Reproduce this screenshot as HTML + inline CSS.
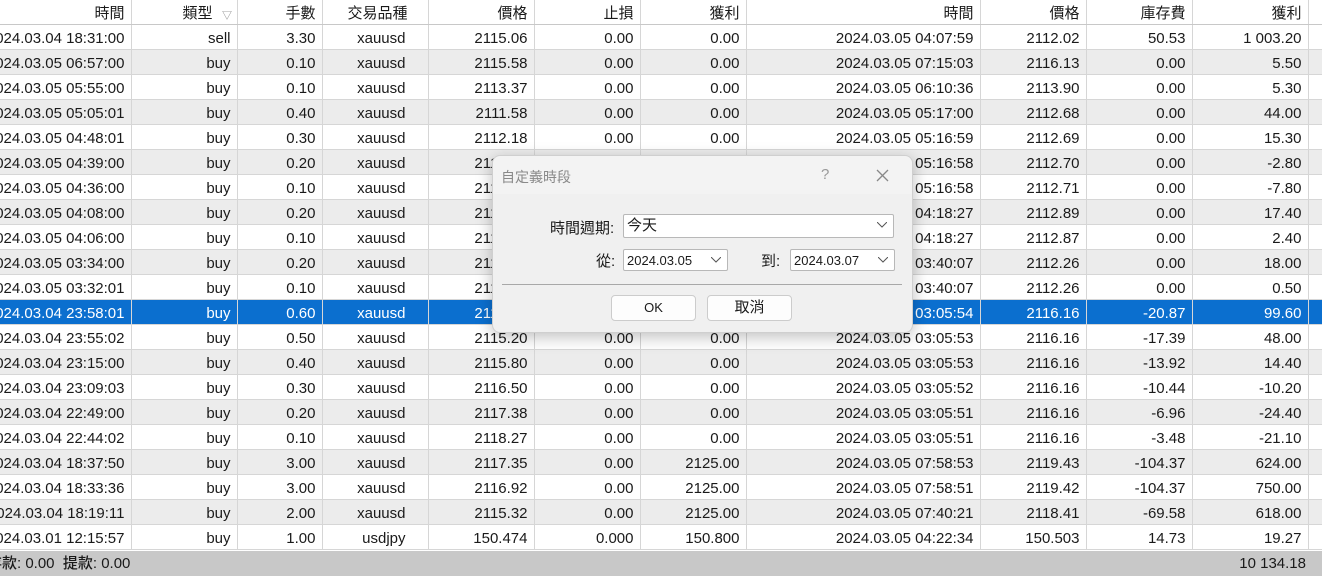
<!DOCTYPE html><html><head><meta charset="utf-8"><style>
body{margin:0;width:1322px;height:585px;overflow:hidden;background:#fff;font-family:"Liberation Sans","Noto Sans CJK TC",sans-serif;color:#1a1a1a;position:relative}
table{position:absolute;left:0;top:0;width:1322px;border-collapse:collapse;table-layout:fixed;font-size:15px}
td{height:21px;padding:3px 6px 0 0;text-align:right;border-right:1px solid #d6d6d6;border-bottom:1px solid #d6d6d6;white-space:nowrap;overflow:hidden;line-height:21px;box-sizing:content-box}
tr.h td{background:#fff;border-bottom:1px solid #c8c8c8}
tr:nth-child(odd):not(.h) td{background:#ececec}
tr.sel td{background:#0b6fcf!important;color:#fff}
td:first-child{direction:rtl}
td:first-child span{display:inline-block;direction:ltr}
.foot{position:absolute;left:0;top:551px;width:1322px;height:25px;background:#c8c8c8;font-size:15px;line-height:25px;font-weight:500}
.dlg{position:absolute;left:492px;top:155px;width:419px;height:176px;background:#f0f0f0;border:1px solid #cfcfcf;border-radius:8px;box-shadow:0 4px 16px rgba(0,0,0,.25);font-size:14px}
.tb{height:38px;background:#f3f3f3;border-radius:8px 8px 0 0}
.a{position:absolute}
.box{position:absolute;background:#fff;border:1px solid #b8b8b8;border-radius:2px;height:22px;line-height:22px;font-size:13px;padding-left:3px;box-sizing:border-box}
.box svg{position:absolute;right:6px;top:7px}
.btn{position:absolute;top:139px;width:85px;height:26px;background:#fdfdfd;border:1px solid #ccc;border-radius:4px;box-sizing:border-box;text-align:center;line-height:24px;font-size:13px}
</style></head><body>
<table>
<colgroup><col style="width:131px"><col style="width:106px"><col style="width:85px"><col style="width:106px"><col style="width:106px"><col style="width:106px"><col style="width:106px"><col style="width:234px"><col style="width:106px"><col style="width:106px"><col style="width:116px"><col style="width:14px"></colgroup>
<tr class="h"><td><span>時間</span></td><td style="padding-right:24px">類型</td><td>手數</td><td style="padding-right:20px">交易品種</td><td>價格</td><td>止損</td><td>獲利</td><td>時間</td><td>價格</td><td>庫存費</td><td>獲利</td><td></td></tr>
<tr><td><span>2024.03.04 18:31:00</span></td><td>sell</td><td>3.30</td><td style="padding-right:22px">xauusd</td><td>2115.06</td><td>0.00</td><td>0.00</td><td>2024.03.05 04:07:59</td><td>2112.02</td><td>50.53</td><td>1 003.20</td><td></td></tr>
<tr><td><span>2024.03.05 06:57:00</span></td><td>buy</td><td>0.10</td><td style="padding-right:22px">xauusd</td><td>2115.58</td><td>0.00</td><td>0.00</td><td>2024.03.05 07:15:03</td><td>2116.13</td><td>0.00</td><td>5.50</td><td></td></tr>
<tr><td><span>2024.03.05 05:55:00</span></td><td>buy</td><td>0.10</td><td style="padding-right:22px">xauusd</td><td>2113.37</td><td>0.00</td><td>0.00</td><td>2024.03.05 06:10:36</td><td>2113.90</td><td>0.00</td><td>5.30</td><td></td></tr>
<tr><td><span>2024.03.05 05:05:01</span></td><td>buy</td><td>0.40</td><td style="padding-right:22px">xauusd</td><td>2111.58</td><td>0.00</td><td>0.00</td><td>2024.03.05 05:17:00</td><td>2112.68</td><td>0.00</td><td>44.00</td><td></td></tr>
<tr><td><span>2024.03.05 04:48:01</span></td><td>buy</td><td>0.30</td><td style="padding-right:22px">xauusd</td><td>2112.18</td><td>0.00</td><td>0.00</td><td>2024.03.05 05:16:59</td><td>2112.69</td><td>0.00</td><td>15.30</td><td></td></tr>
<tr><td><span>2024.03.05 04:39:00</span></td><td>buy</td><td>0.20</td><td style="padding-right:22px">xauusd</td><td>2112.00</td><td>0.00</td><td>0.00</td><td>2024.03.05 05:16:58</td><td>2112.70</td><td>0.00</td><td>-2.80</td><td></td></tr>
<tr><td><span>2024.03.05 04:36:00</span></td><td>buy</td><td>0.10</td><td style="padding-right:22px">xauusd</td><td>2112.00</td><td>0.00</td><td>0.00</td><td>2024.03.05 05:16:58</td><td>2112.71</td><td>0.00</td><td>-7.80</td><td></td></tr>
<tr><td><span>2024.03.05 04:08:00</span></td><td>buy</td><td>0.20</td><td style="padding-right:22px">xauusd</td><td>2112.00</td><td>0.00</td><td>0.00</td><td>2024.03.05 04:18:27</td><td>2112.89</td><td>0.00</td><td>17.40</td><td></td></tr>
<tr><td><span>2024.03.05 04:06:00</span></td><td>buy</td><td>0.10</td><td style="padding-right:22px">xauusd</td><td>2112.00</td><td>0.00</td><td>0.00</td><td>2024.03.05 04:18:27</td><td>2112.87</td><td>0.00</td><td>2.40</td><td></td></tr>
<tr><td><span>2024.03.05 03:34:00</span></td><td>buy</td><td>0.20</td><td style="padding-right:22px">xauusd</td><td>2112.00</td><td>0.00</td><td>0.00</td><td>2024.03.05 03:40:07</td><td>2112.26</td><td>0.00</td><td>18.00</td><td></td></tr>
<tr><td><span>2024.03.05 03:32:01</span></td><td>buy</td><td>0.10</td><td style="padding-right:22px">xauusd</td><td>2112.00</td><td>0.00</td><td>0.00</td><td>2024.03.05 03:40:07</td><td>2112.26</td><td>0.00</td><td>0.50</td><td></td></tr>
<tr class="sel"><td><span>2024.03.04 23:58:01</span></td><td>buy</td><td>0.60</td><td style="padding-right:22px">xauusd</td><td>2114.00</td><td>0.00</td><td>0.00</td><td>2024.03.05 03:05:54</td><td>2116.16</td><td>-20.87</td><td>99.60</td><td></td></tr>
<tr><td><span>2024.03.04 23:55:02</span></td><td>buy</td><td>0.50</td><td style="padding-right:22px">xauusd</td><td>2115.20</td><td>0.00</td><td>0.00</td><td>2024.03.05 03:05:53</td><td>2116.16</td><td>-17.39</td><td>48.00</td><td></td></tr>
<tr><td><span>2024.03.04 23:15:00</span></td><td>buy</td><td>0.40</td><td style="padding-right:22px">xauusd</td><td>2115.80</td><td>0.00</td><td>0.00</td><td>2024.03.05 03:05:53</td><td>2116.16</td><td>-13.92</td><td>14.40</td><td></td></tr>
<tr><td><span>2024.03.04 23:09:03</span></td><td>buy</td><td>0.30</td><td style="padding-right:22px">xauusd</td><td>2116.50</td><td>0.00</td><td>0.00</td><td>2024.03.05 03:05:52</td><td>2116.16</td><td>-10.44</td><td>-10.20</td><td></td></tr>
<tr><td><span>2024.03.04 22:49:00</span></td><td>buy</td><td>0.20</td><td style="padding-right:22px">xauusd</td><td>2117.38</td><td>0.00</td><td>0.00</td><td>2024.03.05 03:05:51</td><td>2116.16</td><td>-6.96</td><td>-24.40</td><td></td></tr>
<tr><td><span>2024.03.04 22:44:02</span></td><td>buy</td><td>0.10</td><td style="padding-right:22px">xauusd</td><td>2118.27</td><td>0.00</td><td>0.00</td><td>2024.03.05 03:05:51</td><td>2116.16</td><td>-3.48</td><td>-21.10</td><td></td></tr>
<tr><td><span>2024.03.04 18:37:50</span></td><td>buy</td><td>3.00</td><td style="padding-right:22px">xauusd</td><td>2117.35</td><td>0.00</td><td>2125.00</td><td>2024.03.05 07:58:53</td><td>2119.43</td><td>-104.37</td><td>624.00</td><td></td></tr>
<tr><td><span>2024.03.04 18:33:36</span></td><td>buy</td><td>3.00</td><td style="padding-right:22px">xauusd</td><td>2116.92</td><td>0.00</td><td>2125.00</td><td>2024.03.05 07:58:51</td><td>2119.42</td><td>-104.37</td><td>750.00</td><td></td></tr>
<tr><td><span>2024.03.04 18:19:11</span></td><td>buy</td><td>2.00</td><td style="padding-right:22px">xauusd</td><td>2115.32</td><td>0.00</td><td>2125.00</td><td>2024.03.05 07:40:21</td><td>2118.41</td><td>-69.58</td><td>618.00</td><td></td></tr>
<tr><td><span>2024.03.01 12:15:57</span></td><td>buy</td><td>1.00</td><td style="padding-right:22px">usdjpy</td><td>150.474</td><td>0.000</td><td>150.800</td><td>2024.03.05 04:22:34</td><td>150.503</td><td>14.73</td><td>19.27</td><td></td></tr>
</table>
<div class="foot"><span class="a" style="left:-13px">存款: 0.00 &nbsp;提款: 0.00</span><span class="a" style="right:16px">10 134.18</span></div>
<div class="a" style="left:222px;top:7px;font-size:10px;color:#888">▽</div>
<div class="dlg">
<div class="tb"></div>
<div class="a" style="left:8px;top:11px;color:#8a8a8a">自定義時段</div>
<div class="a" style="left:328px;top:10px;color:#999;font-size:15px">?</div>
<svg class="a" style="left:383px;top:13px" width="13" height="13"><path d="M1 1L12 12M12 1L1 12" stroke="#888" stroke-width="1.3"/></svg>
<div class="a" style="left:57px;top:61px;font-size:15px">時間週期:</div>
<div class="box" style="left:130px;top:58px;width:271px;height:24px;font-size:15px">今天<svg width="10" height="6"><path d="M0 0L5 5L10 0" fill="none" stroke="#555"/></svg></div>
<div class="a" style="left:103px;top:94px;font-size:15px">從:</div>
<div class="box" style="left:130px;top:93px;width:105px">2024.03.05<svg width="10" height="6"><path d="M0 0L5 5L10 0" fill="none" stroke="#555"/></svg></div>
<div class="a" style="left:268px;top:94px;font-size:15px">到:</div>
<div class="box" style="left:297px;top:93px;width:105px">2024.03.07<svg width="10" height="6"><path d="M0 0L5 5L10 0" fill="none" stroke="#555"/></svg></div>
<div class="a" style="left:9px;top:128px;width:400px;height:1px;background:#a8a8a8"></div>
<div class="btn" style="left:118px">OK</div>
<div class="btn" style="left:214px;font-size:15px">取消</div>
</div>
</body></html>
